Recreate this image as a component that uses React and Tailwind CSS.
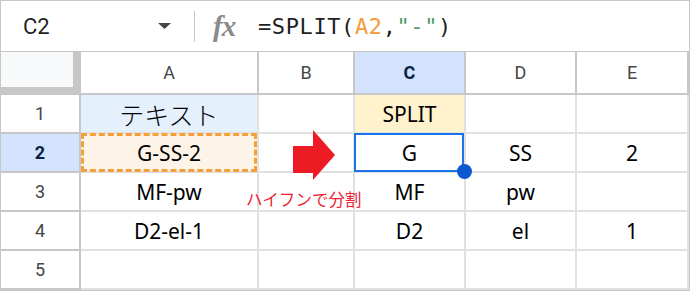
const COLS = ['A', 'B', 'C', 'D', 'E'];

const ROWS = [
  ['テキスト', '', 'SPLIT', '', ''],
  ['G-SS-2', '', 'G', 'SS', '2'],
  ['MF-pw', '', 'MF', 'pw', ''],
  ['D2-el-1', '', 'D2', 'el', '1'],
  ['', '', '', '', ''],
];

function cellBg(r, c) {
  if (r === 0 && c === 0) return 'bg-[#e4f0fc]';
  if (r === 1 && c === 0) return 'bg-[#fdf4e7]';
  if (r === 0 && c === 2) return 'bg-[#fff2cc]';
  return 'bg-white';
}

function FormulaBar() {
  return (
    <div className="h-[51px] border-b border-[#c7c7c7] flex items-center font-['Roboto',sans-serif]">
      <div className="w-[193px] h-full flex items-center pl-[22px] pr-[23px]">
        <span className="text-[22px] text-[#1f1f1f]">C2</span>
        <svg className="ml-auto" width="13" height="6" viewBox="0 0 13 6">
          <polygon points="0,0 13,0 6.5,6" fill="#444746" />
        </svg>
      </div>
      <div className="w-px h-[31px] bg-[#c7c7c7]" />
      <span className="ml-[18px] w-[29px] text-[29px] leading-none italic font-bold text-[#8a8a8a] font-['Liberation_Serif',serif] tracking-[-1px]">
        fx
      </span>
      <span className="ml-[16px] text-[22px] text-[#1f1f1f] font-['DejaVu_Sans_Mono',monospace] tracking-[0.6px]">
        =SPLIT(<span className="text-[#f39b3c]">A2</span>,<span className="text-[#4e9a5e]">"-"</span>)
      </span>
    </div>
  );
}

export default function App() {
  return (
    <div className="w-[690px] h-[293px] bg-white">
      <div className="relative w-[690px] h-[291px] border border-[#c7c7c7] overflow-hidden">
        <FormulaBar />
        <div className="grid grid-cols-[80px_178px_96px_111px_111px_112px] grid-rows-[43px_39px_39px_39px_39px_39px]">
          <div className="bg-[#f8f9fa] border-r-[8px] border-b-[8px] border-[#c7c7c7]" />
          {COLS.map((c) => (
            <div
              key={c}
              className={`flex items-center justify-center border-r-2 border-b-2 border-[#c7c7c7] text-[18px] font-['Roboto',sans-serif] ${
                c === 'C' ? 'bg-[#d3e3fd] text-[#0b1f44] font-bold' : 'bg-white text-[#444746]'
              }`}
            >
              {c}
            </div>
          ))}
          {ROWS.map((row, r) => (
            <div key={r} className="contents">
              <div
                className={`flex items-center justify-center border-r-2 border-b-2 border-[#c7c7c7] text-[18px] font-['Roboto',sans-serif] ${
                  r === 1 ? 'bg-[#d3e3fd] text-[#0b1f44] font-bold' : 'bg-white text-[#444746]'
                }`}
              >
                {r + 1}
              </div>
              {row.map((v, c) => (
                <div
                  key={c}
                  className={`relative flex items-center justify-center pt-[2px] border-r-2 border-b-2 border-[#e1e1e1] text-black ${cellBg(r, c)} ${
                    r === 0 && c === 0
                      ? "text-[25px] font-['Noto_Sans_CJK_JP',sans-serif] font-light"
                      : "text-[21px] font-['Noto_Sans',sans-serif]"
                  }`}
                >
                  {v}
                  {r === 1 && c === 0 && (
                    <div className="absolute -top-[1px] left-0 right-0 -bottom-[1px] border-[3px] border-dashed border-[#f4a03a]" />
                  )}
                  {r === 1 && c === 2 && (
                    <>
                      <div className="absolute -top-[1px] -left-[1px] right-0 -bottom-[1px] border-2 border-[#1a73e8]" />
                      <div className="absolute -right-[8px] -bottom-[8px] w-[15px] h-[15px] rounded-full bg-[#0b57d0] z-10" />
                    </>
                  )}
                </div>
              ))}
            </div>
          ))}
        </div>

        <svg className="absolute left-[292px] top-[129px]" width="43" height="51" viewBox="0 0 43 51">
          <polygon points="0,16 20,16 20,0 42,25 20,50 20,43 0,43" fill="#ed1c24" />
        </svg>
        <span className="absolute left-[245px] top-[187px] text-[16.5px] leading-[22px] text-[#ee2233] font-['Noto_Sans_CJK_JP',sans-serif]">
          ハイフンで分割
        </span>
      </div>
    </div>
  );
}
